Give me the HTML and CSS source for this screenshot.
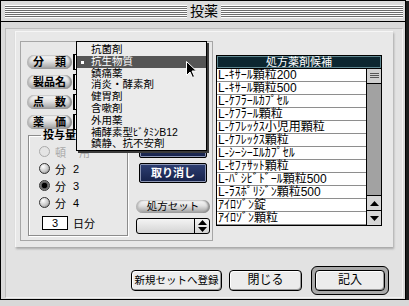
FILE: index.html
```html
<!DOCTYPE html>
<html lang="ja">
	<head>
		<meta charset="UTF-8" />
		<title>投薬</title>
		<link rel="stylesheet" href="styles.css">
	</head>
	<body>
		<div class="window">
			<div class="titlebar">
				<div class="stripes"></div>
				<div class="title">投薬</div>
				<div class="stripes"></div>
			</div>
			<div class="content">
				<div class="frame">
					<div class="panel">
						<div class="left-box">
							<div class="fields">
								<div class="field"><span class="pill">分　類</span><span class="popup"></span></div>
								<div class="field"><span class="pill">製品名</span><span class="popup"></span></div>
								<div class="field"><span class="pill">点　数</span><span class="popup"></span></div>
								<div class="field"><span class="pill">薬　価</span><span class="popup"></span></div>
							</div>
							<fieldset class="dose">
								<legend>投与量</legend>
								<div class="radio disabled"><span class="dot"></span><span class="lbl">頓</span><span class="num">用</span></div>
								<div class="radio"><span class="dot"></span><span class="lbl">分</span><span class="num">2</span></div>
								<div class="radio on"><span class="dot"></span><span class="lbl">分</span><span class="num">3</span></div>
								<div class="radio"><span class="dot"></span><span class="lbl">分</span><span class="num">4</span></div>
								<div class="days"><span class="days-input">3</span><span>日分</span></div>
							</fieldset>
							<div class="mid">
								<span class="dark-btn"></span>
								<span class="dark-btn">取り消し</span>
								<span class="pill set">処方セット</span>
								<span class="stepper-field"><span class="stepper">
									<svg width="9" height="12" viewBox="0 0 9 12"><path d="M4.5 0 L9 5 H0 Z M0 7 H9 L4.5 12 Z" fill="#000"/></svg>
								</span></span>
							</div>
						</div>
						<div class="cands">
							<div class="cands-head">処方薬剤候補</div>
							<div class="cands-box">
								<ul class="rows">
									<li>L-ｷｻｰﾙ顆粒200</li>
									<li>L-ｷｻｰﾙ顆粒500</li>
									<li>L-ｹﾌﾗｰﾙｶﾌﾟｾﾙ</li>
									<li>L-ｹﾌﾗｰﾙ顆粒</li>
									<li>L-ｹﾌﾚｯｸｽ小児用顆粒</li>
									<li>L-ｹﾌﾚｯｸｽ顆粒</li>
									<li>L-ｼｰｼｰｴﾙｶﾌﾟｾﾙ</li>
									<li>L-ｾﾌｧｻｯﾄ顆粒</li>
									<li>L-ﾊﾟｼﾋﾞﾄﾞｰﾙ顆粒500</li>
									<li>L-ﾗｽﾎﾟﾘｼﾞﾝ顆粒500</li>
									<li>ｱｲﾛｿﾞﾝ錠</li>
									<li>ｱｲﾛｿﾞﾝ顆粒</li>
								</ul>
								<div class="scrollbar">
									<span class="thumb"></span>
									<span class="track"></span>
									<span class="arrow"><svg width="9" height="5" viewBox="0 0 9 5"><path d="M4.5 0 L9 5 H0 Z" fill="#000"/></svg></span>
									<span class="arrow"><svg width="9" height="5" viewBox="0 0 9 5"><path d="M0 0 H9 L4.5 5 Z" fill="#000"/></svg></span>
								</div>
							</div>
						</div>
					</div>
					<div class="actions">
						<span class="btn new">新規セットへ登録</span>
						<span class="btn close">閉じる</span>
						<span class="btn-ring"><span class="btn ok">記入</span></span>
					</div>
				</div>
			</div>

			<!-- open popup menu for 分類 -->
			<ul class="menu">
				<li>抗菌剤</li>
				<li class="sel">抗生物質</li>
				<li>鎮痛薬</li>
				<li>消炎・酵素剤</li>
				<li>健胃剤</li>
				<li>含嗽剤</li>
				<li>外用薬</li>
				<li>補酵素型ﾋﾞﾀﾐﾝB12</li>
				<li>鎮静、抗不安剤</li>
			</ul>
			<svg class="cursor" width="11" height="17" viewBox="0 0 11 17">
				<path d="M0.5 0.5 V14.5 L4 11 L6.5 16.5 L8.5 15.5 L6 10 H10.5 Z" fill="#000" stroke="#fff" stroke-width="1"/>
			</svg>
		</div>
	</body>
</html>
```

FILE: styles.css
```css
* {
	box-sizing: border-box;
}
body {
	margin: 0;
	background: #d8d8d8;
	font-family: "Liberation Sans", "Noto Sans CJK JP", sans-serif;
	font-size: 12px;
	color: #000;
}
ul {
	list-style: none;
	margin: 0;
	padding: 0;
}
.window {
	position: relative;
	width: 406px;
	height: 300px;
	border: 1px solid #000;
	background: #dadada;
	box-shadow: 3px 1px 0 #1c1c1c;
}
.titlebar {
	display: flex;
	align-items: center;
	height: 21px;
	padding: 0 2px 0 4px;
	background: #dcdcdc;
	border-bottom: 1px solid #000;
}
.stripes {
	flex: 1;
	height: 13px;
	background: repeating-linear-gradient(#fff 0 1px, #6e6e6e 1px 2px);
}
.title {
	padding: 0 3px;
	font-size: 14px;
	line-height: 20px;
}
.content {
	height: 277px;
	padding: 6px 2px 0 4px;
}
.frame {
	display: flex;
	flex-direction: column;
	height: 270px;
	border: 1px solid #bcbcbc;
	border-right-color: #f2f2f2;
	border-bottom-color: #f2f2f2;
	background: #e2e2e2;
	padding: 2px 9px 2px 9px;
}
.panel {
	display: flex;
	flex: none;
	height: 216px;
	background: #e8e8e8;
	border-top: 1px solid #f6f6f6;
	border-left: 1px solid #f6f6f6;
	box-shadow: 1px 2px 2px #a9a9a9;
	padding: 9px 0 0 4px;
}
.left-box {
	display: grid;
	grid-template-columns: 101px 72px;
	column-gap: 9px;
	grid-template-rows: 74px auto;
	width: 193px;
	height: 200px;
	border: 1px solid #a6a6a6;
	padding: 13px 0 0 6px;
}
.fields {
	grid-column: 1 / 3;
	display: flex;
	flex-direction: column;
	gap: 6px;
}
.field {
	display: flex;
	height: 14px;
}
.pill {
	display: inline-block;
	width: 45px;
	height: 14px;
	line-height: 14px;
	text-align: center;
	font-size: 11px;
	font-weight: bold;
	white-space: nowrap;
	border-radius: 7px;
	background: linear-gradient(#fbfbfb, #e0e0e0 45%, #9c9c9c);
	box-shadow: inset -2px 0 2px #8a8a8a, inset 2px 0 2px #b5b5b5;
}
.popup {
	width: 132px;
	height: 16px;
	margin: -1px 0 0 1px;
	border: 1px solid #000;
	border-left-width: 2px;
	background: #fff;
}
.dose {
	margin: 0 0 0 1px;
	padding: 2px 0 0 10px;
	height: 107px;
	border: 1px solid #8c8c8c;
	box-shadow: inset 1px 1px 0 #fff, 1px 1px 0 #fff;
}
.dose legend {
	padding: 0 2px;
	margin-left: 2px;
	font-size: 11px;
	font-weight: bold;
	line-height: 12px;
}
.radio {
	display: flex;
	align-items: center;
	height: 17px;
	font-size: 11px;
}
.dot {
	width: 11px;
	height: 11px;
	border-radius: 50%;
	border: 1px solid #333;
	background: radial-gradient(circle at 35% 30%, #fff, #c8c8c8 55%, #777);
	margin-right: 5px;
}
.lbl {
	width: 18px;
}
.radio.on .dot {
	background: radial-gradient(circle, #000 0 2.5px, #555 3px, #999 5px);
}
.radio.disabled {
	color: #a8a8a8;
}
.radio.disabled .num {
	margin-left: 6px;
}
.radio.disabled .dot {
	border-color: #aaa;
	background: #e4e4e4;
}
.days {
	display: flex;
	align-items: center;
	gap: 5px;
	margin: 4px 0 0 3px;
	font-size: 11px;
}
.days-input {
	width: 26px;
	height: 14px;
	line-height: 12px;
	border: 1px solid #000;
	background: #fff;
	text-align: center;
}
.mid {
	display: flex;
	flex-direction: column;
	align-items: center;
	padding-top: 9px;
}
.dark-btn {
	width: 68px;
	height: 20px;
	margin-bottom: 5px;
	line-height: 18px;
	text-align: center;
	color: #fff;
	font-size: 11px;
	font-weight: bold;
	border: 1px solid #000;
	border-radius: 2px;
	background: linear-gradient(#2e3f73, #16224a);
	box-shadow: inset 0 0 0 1px #8c96b4;
}
.pill.set {
	width: 74px;
	height: 13px;
	line-height: 13px;
	margin-top: 12px;
	font-size: 10.5px;
	font-weight: normal;
}
.stepper-field {
	display: flex;
	justify-content: flex-end;
	width: 74px;
	height: 16px;
	margin-top: 5px;
	border: 1px solid #000;
	border-radius: 3px;
	background: linear-gradient(#f4f4f4, #d4d4d4);
}
.stepper {
	display: flex;
	align-items: center;
	justify-content: center;
	width: 15px;
	border-left: 1px solid #000;
}
.cands {
	margin: 14px 0 0 3px;
	width: 166px;
}
.cands-head {
	height: 14px;
	line-height: 12px;
	text-align: center;
	color: #fff;
	font-size: 11px;
	background: #0c2630;
	border: 1px solid #000;
	box-shadow: inset 0 0 0 1px #5f8790;
}
.cands-box {
	display: flex;
	height: 157px;
	border: 1px solid #000;
	border-top: 0;
	background: #fff;
}
.rows {
	flex: 1;
}
.rows li {
	height: 13px;
	line-height: 12px;
	padding-left: 1px;
	border-bottom: 1px solid #8e8e8e;
	white-space: nowrap;
}
.scrollbar {
	display: flex;
	flex-direction: column;
	width: 15px;
	border-left: 1px solid #000;
}
.thumb {
	height: 15px;
	border-bottom: 1px solid #000;
	background: repeating-linear-gradient(#cfcfcf 0 4px, #555 4px 5px, #cfcfcf 5px 6px, #555 6px 7px, #cfcfcf 7px 8px, #555 8px 9px, #cfcfcf 9px 15px);
	background-size: 9px 15px;
	background-position: center;
	background-repeat: no-repeat;
	background-color: #cfcfcf;
}
.track {
	flex: 1;
	background: #a2a2a2;
}
.arrow {
	display: flex;
	align-items: center;
	justify-content: center;
	height: 15px;
	border-top: 1px solid #000;
	background: #d6d6d6;
}
.actions {
	display: flex;
	align-items: center;
	margin: auto 0 0 116px;
}
.btn {
	display: inline-block;
	flex: none;
	height: 21px;
	line-height: 19px;
	font-size: 12px;
	text-align: center;
	white-space: nowrap;
	border: 1px solid #000;
	border-radius: 4px;
	background: #ececec;
	box-shadow: inset -1px -1px 0 #9a9a9a, inset 1px 1px 0 #fff;
}
.btn.new {
	width: 91px;
	font-size: 10.5px;
}
.btn.close {
	width: 73px;
	margin-left: 7px;
}
.btn-ring {
	display: inline-block;
	flex: none;
	margin-left: 9px;
	padding: 3px;
	border: 1px solid #000;
	border-radius: 6px;
	background: #a9a9a9;
}
.btn.ok {
	display: block;
	width: 70px;
}
.menu {
	position: absolute;
	left: 75px;
	top: 40px;
	width: 131px;
	padding-top: 2px;
	border: 1px solid #000;
	background: #ebebeb;
	box-shadow: 2px 2px 0 #3a3a3a;
}
.menu li {
	height: 11.8px;
	line-height: 11.8px;
	padding-left: 14px;
	font-size: 10.5px;
	white-space: nowrap;
}
.menu li.sel {
	position: relative;
	background: #555;
	color: #fff;
}
.menu li.sel::before {
	content: "";
	position: absolute;
	left: 4px;
	top: 5px;
	width: 3px;
	height: 3px;
	background: #fff;
}
.cursor {
	position: absolute;
	left: 185px;
	top: 60px;
}
```
